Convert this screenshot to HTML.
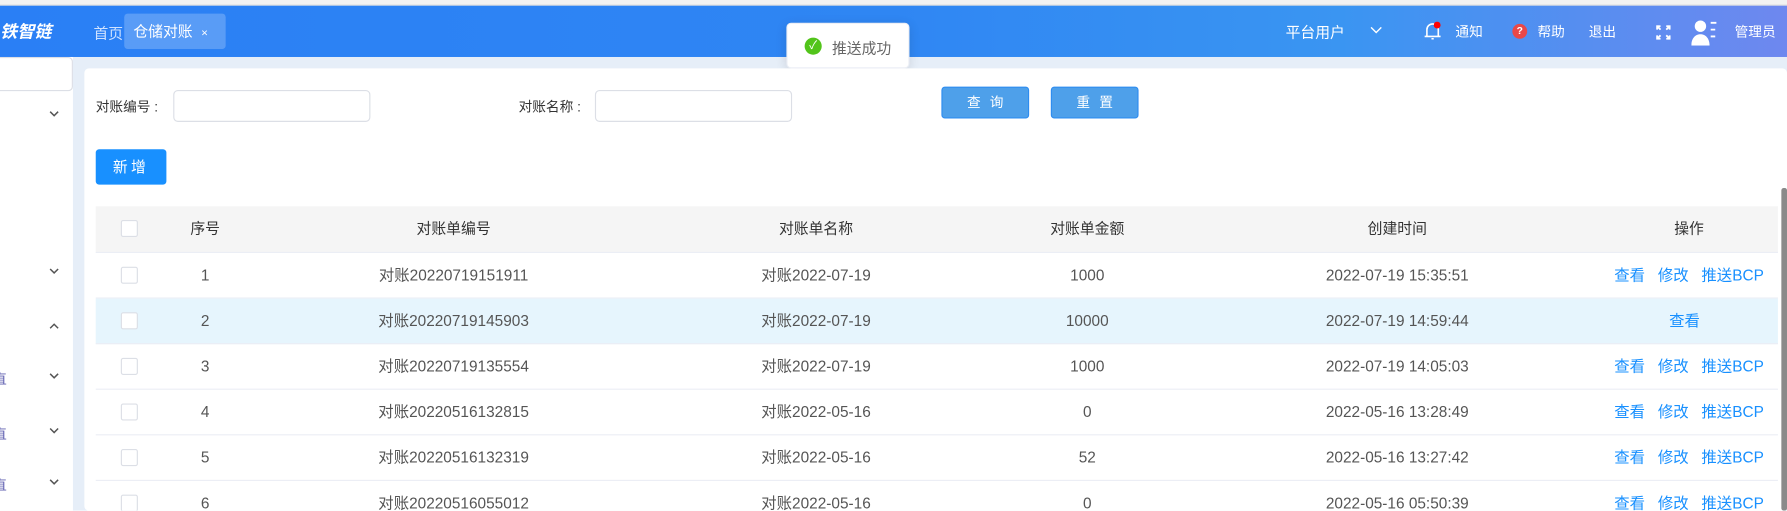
<!DOCTYPE html>
<html><head><meta charset="utf-8">
<style>
*{box-sizing:border-box;margin:0;padding:0}
body{width:1787px;height:511px;overflow:hidden;background:#fff;font-family:"Liberation Sans","Noto Sans CJK SC",sans-serif}
#w{position:absolute;left:0;top:0;width:1568px;height:448px;transform:scale(1.1397);transform-origin:0 0;background:#e6eef8;overflow:hidden}
.a{position:absolute}
.hd{left:0;top:5px;width:1568px;height:45px;background:linear-gradient(90deg,#2a7ff5 0%,#2f86f3 50%,#3a95f2 75%,#6e88ef 100%)}
.wt{color:#fff;font-size:12px}
.card{left:74px;top:60px;width:1494px;height:388px;background:#fff;border-radius:4px}
.inp{height:28px;border:1px solid #dcdfe6;border-radius:4px;background:#fff}
.lbl{font-size:12px;color:#333}
.btn{height:28px;border:1px solid #2d8cf0;background:#4ea0ea;color:#fff;font-size:12px;text-align:center;line-height:26px;border-radius:3px;letter-spacing:8px;text-indent:8px}
.row{left:84px;width:1476px;height:40px;border-bottom:1px solid #ebeef5;font-size:13.5px;color:#555}
.row span{position:absolute;top:0;line-height:40px;transform:translateX(-50%);white-space:nowrap}
.cb{position:absolute;left:22px;top:12px;width:15px;height:15px;border:1px solid #dcdfe6;border-radius:2px;background:#fff}
.op{color:#1890ff}
.chev{left:43px}
</style></head><body><div id="w">
<div class="a" style="left:0;top:0;width:1568px;height:5px;background:#f2f2f2;border-bottom:1px solid #ddd"></div>
<div class="a hd"></div>
<div class="a" style="left:0;top:17px;color:#fff;font-weight:bold;font-style:italic;font-size:15px">铁智链</div>
<div class="a" style="left:82px;top:19px;color:#cfe2ff;font-size:13px">首页</div>
<div class="a" style="left:109px;top:12px;width:89px;height:31px;background:rgba(255,255,255,.22);border-radius:3px;color:#fff;font-size:13px;line-height:31px;padding-left:8px">仓储对账 <span style="font-size:10px;margin-left:4px">×</span></div>
<div class="a wt" style="left:1128px;top:18px;font-size:13px">平台用户</div>
<svg class="a" style="left:1202px;top:23px" width="11" height="7" viewBox="0 0 11 7"><path d="M1 1l4.5 4.5L10 1" stroke="#fff" stroke-width="1.2" fill="none"/></svg>
<svg class="a" style="left:1249px;top:19px" width="16" height="18" viewBox="0 0 16 18"><path d="M3 13V7a5 5 0 0 1 10 0v6M1 13h14M7 15h2" stroke="#fff" stroke-width="1.4" fill="none"/><circle cx="12" cy="3" r="3" fill="#f00"/></svg>
<div class="a wt" style="left:1277px;top:19px">通知</div>
<div class="a" style="left:1327px;top:21px;width:13px;height:13px;border-radius:50%;background:#e84848;color:#fff;font-size:9px;text-align:center;line-height:13px;font-weight:bold">?</div>
<div class="a wt" style="left:1349px;top:19px">帮助</div>
<div class="a wt" style="left:1394px;top:19px">退出</div>
<svg class="a" style="left:1453px;top:22px" width="13" height="13" viewBox="0 0 13 13"><path d="M1 4V1h3M9 1h3v3M12 9v3H9M4 12H1V9M1 1l3 3M12 1L9 4M12 12L9 9M1 12l3-3" stroke="#fff" stroke-width="1.6" fill="none"/></svg>
<svg class="a" style="left:1484px;top:16px" width="24" height="24" viewBox="0 0 24 24"><circle cx="8" cy="7" r="5" fill="#fff"/><path d="M0 24c0-7 4-10 8-10s8 3 8 10z" fill="#fff"/><path d="M17 4h5M17 10h4M17 16h4" stroke="#fff" stroke-width="1.6"/></svg>
<div class="a wt" style="left:1522px;top:19px">管理员</div>
<div class="a" style="left:690px;top:20px;width:108px;height:40px;background:#fff;border-radius:4px;box-shadow:0 2px 10px rgba(0,0,0,.12);border:1px solid #ebeef5"></div>
<div class="a" style="left:706px;top:33px;width:15px;height:15px;border-radius:50%;background:#52c41a;color:#fff;font-size:10px;text-align:center;line-height:15px">✓</div>
<div class="a" style="left:730px;top:32px;font-size:13px;color:#666">推送成功</div>
<div class="a" style="left:0;top:50px;width:64px;height:398px;background:#fff"></div>
<div class="a" style="left:-5px;top:50px;width:69px;height:30px;border:1px solid #dcdfe6;border-radius:4px;background:#fff"></div>
<svg class="a chev" style="top:97px" width="9" height="6" viewBox="0 0 9 6"><path d="M1 1l3.5 3.5L8 1" stroke="#555" stroke-width="1.3" fill="none"/></svg>
<svg class="a chev" style="top:235px" width="9" height="6" viewBox="0 0 9 6"><path d="M1 1l3.5 3.5L8 1" stroke="#555" stroke-width="1.3" fill="none"/></svg>
<svg class="a chev" style="top:283px" width="9" height="6" viewBox="0 0 9 6"><path d="M1 5l3.5-3.5L8 5" stroke="#555" stroke-width="1.3" fill="none"/></svg>
<svg class="a chev" style="top:327px" width="9" height="6" viewBox="0 0 9 6"><path d="M1 1l3.5 3.5L8 1" stroke="#555" stroke-width="1.3" fill="none"/></svg>
<svg class="a chev" style="top:375px" width="9" height="6" viewBox="0 0 9 6"><path d="M1 1l3.5 3.5L8 1" stroke="#555" stroke-width="1.3" fill="none"/></svg>
<svg class="a chev" style="top:420px" width="9" height="6" viewBox="0 0 9 6"><path d="M1 1l3.5 3.5L8 1" stroke="#555" stroke-width="1.3" fill="none"/></svg>
<div class="a" style="left:-6px;top:324px;color:#6060b0;font-size:12px">直</div>
<div class="a" style="left:-6px;top:372px;color:#6060b0;font-size:12px">直</div>
<div class="a" style="left:-6px;top:417px;color:#6060b0;font-size:12px">直</div>
<div class="a card"></div>
<div class="a lbl" style="left:84px;top:85px">对账编号 :</div>
<div class="a inp" style="left:152px;top:79px;width:173px"></div>
<div class="a lbl" style="left:455px;top:85px">对账名称 :</div>
<div class="a inp" style="left:522px;top:79px;width:173px"></div>
<div class="a btn" style="left:826px;top:76px;width:77px">查询</div>
<div class="a btn" style="left:922px;top:76px;width:77px">重置</div>
<div class="a" style="left:84px;top:131px;width:62px;height:31px;background:#1890ff;color:#fff;font-size:13px;text-align:center;line-height:31px;border-radius:3px;letter-spacing:3px">新增</div>
<div class="a row" style="top:181px;height:41px;background:#f5f5f5;color:#333;font-size:13px"><div class="cb"></div><span style="left:96px">序号</span><span style="left:314px">对账单编号</span><span style="left:632px">对账单名称</span><span style="left:870px">对账单金额</span><span style="left:1142px">创建时间</span><span style="left:1398px">操作</span></div>
<div class="a row" style="top:222px"><div class="cb"></div><span style="left:96px">1</span><span style="left:314px">对账20220719151911</span><span style="left:632px">对账2022-07-19</span><span style="left:870px">1000</span><span style="left:1142px">2022-07-19 15:35:51</span><span class="op" style="left:1398px">查看&nbsp;&nbsp;&nbsp;修改&nbsp;&nbsp;&nbsp;推送BCP</span></div>
<div class="a row" style="top:262px;background:#e6f5fd"><div class="cb"></div><span style="left:96px">2</span><span style="left:314px">对账20220719145903</span><span style="left:632px">对账2022-07-19</span><span style="left:870px">10000</span><span style="left:1142px">2022-07-19 14:59:44</span><span class="op" style="left:1394px">查看</span></div>
<div class="a row" style="top:302px"><div class="cb"></div><span style="left:96px">3</span><span style="left:314px">对账20220719135554</span><span style="left:632px">对账2022-07-19</span><span style="left:870px">1000</span><span style="left:1142px">2022-07-19 14:05:03</span><span class="op" style="left:1398px">查看&nbsp;&nbsp;&nbsp;修改&nbsp;&nbsp;&nbsp;推送BCP</span></div>
<div class="a row" style="top:342px"><div class="cb"></div><span style="left:96px">4</span><span style="left:314px">对账20220516132815</span><span style="left:632px">对账2022-05-16</span><span style="left:870px">0</span><span style="left:1142px">2022-05-16 13:28:49</span><span class="op" style="left:1398px">查看&nbsp;&nbsp;&nbsp;修改&nbsp;&nbsp;&nbsp;推送BCP</span></div>
<div class="a row" style="top:382px"><div class="cb"></div><span style="left:96px">5</span><span style="left:314px">对账20220516132319</span><span style="left:632px">对账2022-05-16</span><span style="left:870px">52</span><span style="left:1142px">2022-05-16 13:27:42</span><span class="op" style="left:1398px">查看&nbsp;&nbsp;&nbsp;修改&nbsp;&nbsp;&nbsp;推送BCP</span></div>
<div class="a row" style="top:422px"><div class="cb"></div><span style="left:96px">6</span><span style="left:314px">对账20220516055012</span><span style="left:632px">对账2022-05-16</span><span style="left:870px">0</span><span style="left:1142px">2022-05-16 05:50:39</span><span class="op" style="left:1398px">查看&nbsp;&nbsp;&nbsp;修改&nbsp;&nbsp;&nbsp;推送BCP</span></div>
<div class="a" style="left:1563px;top:165px;width:5px;height:283px;background:#8a8a8a;border-radius:2px"></div>
</div></body></html>
